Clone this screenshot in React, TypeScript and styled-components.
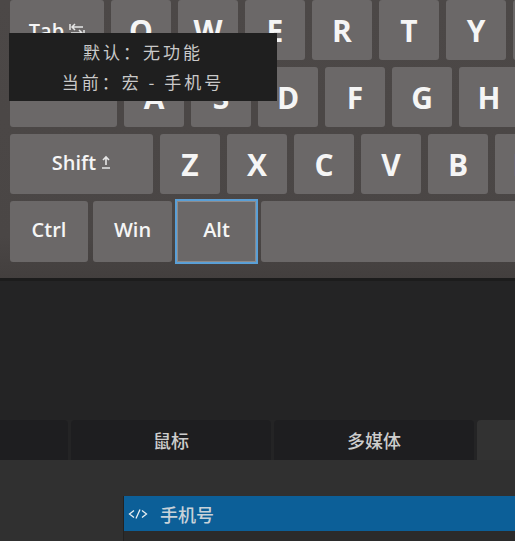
import styled, { createGlobalStyle } from "styled-components";

type KeyData = {
  label: string;
  width?: number;
  icon?: "tab" | "caps" | "shift";
  selected?: boolean;
  lift?: number;
};

const rows: { gap: number; height: number; keys: KeyData[] }[] = [
  {
    gap: 7,
    height: 60,
    keys: [
      { label: "Tab", width: 94, icon: "tab" },
      ..."QWERTYUIOP".split("").map((l) => ({ label: l })),
    ],
  },
  {
    gap: 7,
    height: 60,
    keys: [
      { label: "Caps", width: 107, icon: "caps", lift: 9 },
      ..."ASDFGHJKL".split("").map((l) => ({ label: l })),
    ],
  },
  {
    gap: 7,
    height: 60,
    keys: [
      { label: "Shift", width: 143, icon: "shift", lift: 2 },
      ..."ZXCVBNM".split("").map((l) => ({ label: l })),
    ],
  },
  {
    gap: 5,
    height: 61,
    keys: [
      { label: "Ctrl", width: 78, lift: 2 },
      { label: "Win", width: 79, lift: 2 },
      { label: "Alt", width: 79, selected: true, lift: 2 },
      { label: "", width: 420 },
    ],
  },
];

const tabs = ["键盘", "鼠标", "多媒体", "宏"];

function KeyIcon({ kind }: { kind: "tab" | "caps" | "shift" }) {
  if (kind === "tab") {
    return (
      <svg width="16" height="14" viewBox="0 0 16 14" fill="none" stroke="#e6e6e6" strokeWidth="1.5">
        <path d="M14 4H3M6 1L3 4L6 7M1 1V7" />
        <path d="M2 10H13M10 7L13 10L10 13M15 7V13" />
      </svg>
    );
  }
  return (
    <svg width="10" height="14" viewBox="0 0 10 14" fill="none" stroke="#e6e6e6" strokeWidth="1.6">
      <path d="M5 10V2M2 5L5 2L8 5M1 13H9" />
    </svg>
  );
}

export default function App() {
  return (
    <>
      <GlobalStyle />
      <Page>
        <KeyboardPanel>
          {rows.map((row, i) => (
            <KeyRow key={i} $gap={row.gap} $height={row.height}>
              {row.keys.map((k, j) => (
                <Key
                  key={j}
                  $width={k.width}
                  $selected={k.selected}
                  $small={!!k.width}
                  $lift={k.lift ?? 0}
                >
                  {k.label}
                  {k.icon && <KeyIcon kind={k.icon} />}
                </Key>
              ))}
            </KeyRow>
          ))}
          <Tooltip>
            <div>默认：无功能</div>
            <div>当前：宏 - 手机号</div>
          </Tooltip>
        </KeyboardPanel>
        <Blank />
        <TabStrip>
          <TabTrack>
            {tabs.map((t, i) => (
              <Tab key={t} $active={i === 3}>
                {t}
              </Tab>
            ))}
          </TabTrack>
        </TabStrip>
        <Content>
          <List>
            <ListItem>
              <svg width="20" height="10" viewBox="0 0 20 10" fill="none" stroke="#e8eef2" strokeWidth="1.3">
                <path d="M6 1.5L1.5 5L6 8.5M8 9.5L12 0.5M14 1.5L18.5 5L14 8.5" />
              </svg>
              <ItemText>手机号</ItemText>
            </ListItem>
          </List>
        </Content>
      </Page>
    </>
  );
}

const GlobalStyle = createGlobalStyle`
  html, body {
    margin: 0;
    padding: 0;
    background: #242425;
    overflow: hidden;
  }
`;

const Page = styled.div`
  height: 100vh;
  display: flex;
  flex-direction: column;
  font-family: "Open Sans", "Noto Sans", sans-serif;
`;

const KeyboardPanel = styled.div`
  position: relative;
  background: linear-gradient(#4c4847, #4a4645 85%, #433f3e);
  padding: 0 0 16px 10px;
  display: flex;
  flex-direction: column;
  gap: 7px;
  overflow: hidden;
  border-bottom: 3px solid #1c1c1c;
  flex-shrink: 0;
`;

const KeyRow = styled.div<{ $gap: number; $height: number }>`
  display: flex;
  gap: ${(p) => p.$gap}px;
  height: ${(p) => p.$height}px;
`;

const Key = styled.div<{ $width?: number; $selected?: boolean; $small: boolean; $lift: number }>`
  flex-shrink: 0;
  width: ${(p) => p.$width ?? 60}px;
  box-sizing: border-box;
  padding-bottom: ${(p) => p.$lift * 2}px;
  background: #6b6868;
  border-radius: ${(p) => (p.$selected ? 0 : 3)}px;
  display: flex;
  align-items: center;
  justify-content: center;
  gap: 5px;
  color: #f5f5f5;
  font-weight: ${(p) => (p.$small ? 600 : 700)};
  font-size: ${(p) => (p.$small ? 20 : 30)}px;
  outline: ${(p) => (p.$selected ? "2px solid #5a9fd6" : "none")};
  box-shadow: ${(p) => (p.$selected ? "inset 0 0 0 1px #8d8a8a" : "none")};
`;

const Tooltip = styled.div`
  position: absolute;
  left: 9px;
  top: 33px;
  width: 268px;
  height: 68px;
  box-sizing: border-box;
  padding: 4px 0;
  background: #1f1f1f;
  color: #c9c9c9;
  font-family: "Noto Sans CJK SC", sans-serif;
  font-size: 17px;
  line-height: 30px;
  letter-spacing: 3px;
  text-align: center;
`;

const Blank = styled.div`
  height: 139px;
  flex-shrink: 0;
`;

const TabStrip = styled.div`
  height: 40px;
  overflow: hidden;
  flex-shrink: 0;
`;

const TabTrack = styled.div`
  display: flex;
  gap: 3px;
  margin-left: -132px;
`;

const Tab = styled.div<{ $active: boolean }>`
  flex-shrink: 0;
  width: 200px;
  height: 40px;
  line-height: 40px;
  text-align: center;
  border-radius: 4px 4px 0 0;
  background: ${(p) => (p.$active ? "#323232" : "#1e1e20")};
  color: #cdcdcd;
  font-family: "Noto Sans CJK SC", sans-serif;
  font-size: 18px;
  font-weight: 500;
`;

const Content = styled.div`
  flex: 1;
  background: #303030;
  padding: 36px 0 0 123px;
  display: flex;
`;

const List = styled.div`
  flex: 1;
  background: #2b2b2b;
  border-left: 1px solid #222;
`;

const ListItem = styled.div`
  height: 35px;
  background: #0c5f98;
  display: flex;
  align-items: center;
  padding-left: 4px;
  gap: 12px;
`;

const ItemText = styled.span`
  color: #c8d2d9;
  font-family: "Noto Sans CJK SC", sans-serif;
  font-size: 18px;
  font-weight: 500;
`;
